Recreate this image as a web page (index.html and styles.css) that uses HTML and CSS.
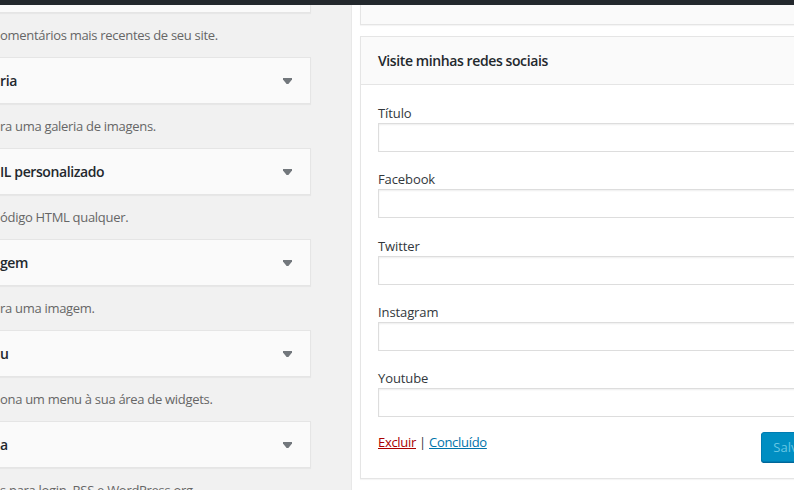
FILE: index.html
```html
<!DOCTYPE html>
<html lang="pt-BR">
<head>
<meta charset="utf-8">
<title>Widgets</title>
<link rel="stylesheet" href="styles.css">
</head>
<body>
<div class="adminbar"></div>
<div class="page">
  <div class="available">
    <div class="widget-top"><span class="wtitle">ários recentes</span><svg class="arrow" viewBox="0 0 9 6" width="9" height="6"><path d="M0 0H9V1.5L5.4 6H3.6L0 1.5Z"/></svg></div>
    <p class="desc">omentários mais recentes de seu site.</p>
    <div class="widget-top"><span class="wtitle">ria</span><svg class="arrow" viewBox="0 0 9 6" width="9" height="6"><path d="M0 0H9V1.5L5.4 6H3.6L0 1.5Z"/></svg></div>
    <p class="desc">ra uma galeria de imagens.</p>
    <div class="widget-top"><span class="wtitle">IL personalizado</span><svg class="arrow" viewBox="0 0 9 6" width="9" height="6"><path d="M0 0H9V1.5L5.4 6H3.6L0 1.5Z"/></svg></div>
    <p class="desc">ódigo HTML qualquer.</p>
    <div class="widget-top"><span class="wtitle">gem</span><svg class="arrow" viewBox="0 0 9 6" width="9" height="6"><path d="M0 0H9V1.5L5.4 6H3.6L0 1.5Z"/></svg></div>
    <p class="desc">ra uma imagem.</p>
    <div class="widget-top"><span class="wtitle">u</span><svg class="arrow" viewBox="0 0 9 6" width="9" height="6"><path d="M0 0H9V1.5L5.4 6H3.6L0 1.5Z"/></svg></div>
    <p class="desc">ona um menu à sua área de widgets.</p>
    <div class="widget-top"><span class="wtitle">a</span><svg class="arrow" viewBox="0 0 9 6" width="9" height="6"><path d="M0 0H9V1.5L5.4 6H3.6L0 1.5Z"/></svg></div>
    <p class="desc">s para login, RSS e WordPress.org.</p>
  </div>
  <div class="sidebar">
    <div class="widget collapsed"></div>
    <div class="widget open">
      <div class="widget-head"><h3 class="head-title">Visite minhas redes sociais</h3></div>
      <div class="widget-inside">
        <div class="field"><label class="flabel">Título</label><input class="finput" type="text"></div>
        <div class="field"><label class="flabel">Facebook</label><input class="finput" type="text"></div>
        <div class="field"><label class="flabel">Twitter</label><input class="finput" type="text"></div>
        <div class="field"><label class="flabel">Instagram</label><input class="finput" type="text"></div>
        <div class="field"><label class="flabel">Youtube</label><input class="finput" type="text"></div>
        <div class="actions">
          <div class="links"><a class="lnk-del" href="#">Excluir</a> <span class="sep">|</span> <a class="lnk-done" href="#">Concluído</a></div>
          <button class="btn-save" type="button" disabled>Salvar</button>
        </div>
      </div>
    </div>
  </div>
</div>
</body>
</html>
```

FILE: styles.css
```css
html, body {
  margin: 0;
  padding: 0;
  width: 794px;
  height: 490px;
  overflow: hidden;
  background: #f1f1f1;
  font-family: "Open Sans", "Noto Sans", "Liberation Sans", sans-serif;
  font-size: 13px;
  color: #444;
}

.adminbar {
  position: fixed;
  top: 0;
  left: 0;
  right: 0;
  height: 5px;
  background: #23282d;
  z-index: 10;
}

.page {
  display: grid;
  grid-template-columns: 351px 1fr;
  height: 490px;
}

.available {
  width: 311px;
  margin-top: -34px;
}

.widget-top {
  box-sizing: border-box;
  height: 47px;
  background: #fafafa;
  border: 1px solid #e5e5e5;
  border-left: 0;
  box-shadow: 0 1px 1px rgba(0, 0, 0, 0.04);
  display: flex;
  align-items: center;
  justify-content: space-between;
  padding: 0 18px 0 0;
}

.wtitle {
  font-weight: 600;
  font-size: 14px;
  color: #23282d;
  white-space: nowrap;
  letter-spacing: -0.4px;
}

.arrow {
  fill: #72777c;
  display: block;
}

.desc {
  margin: 0;
  padding: 13px 0;
  line-height: 18px;
  color: #666;
  white-space: nowrap;
  letter-spacing: -0.3px;
}

.sidebar {
  background: #fff;
  border-left: 1px solid #e8e8e8;
  padding-left: 8px;
}

.widget {
  box-sizing: border-box;
  width: 480px;
  border: 1px solid #e5e5e5;
  background: #fafafa;
  box-shadow: 0 1px 1px rgba(0, 0, 0, 0.04);
}

.collapsed {
  height: 47px;
  margin-top: -22px;
  margin-bottom: 11px;
}

.open {
  background: #fff;
}

.widget-head {
  height: 47px;
  background: #fafafa;
  border-bottom: 1px solid #e5e5e5;
  display: flex;
  align-items: center;
  padding-left: 17px;
}

.head-title {
  margin: 0;
  font-size: 14px;
  font-weight: 600;
  color: #23282d;
  letter-spacing: -0.4px;
}

.widget-inside {
  padding: 19px 17px 16px 17px;
  display: flex;
  flex-direction: column;
  gap: 18.25px;
}

.field {
  display: flex;
  flex-direction: column;
}

.flabel {
  display: block;
  line-height: 18px;
  height: 18px;
  color: #32373c;
  letter-spacing: -0.1px;
}

.finput {
  box-sizing: border-box;
  margin: 1px 0 0 0;
  height: 29px;
  width: 100%;
  border: 1px solid #ddd;
  box-shadow: inset 0 1px 2px rgba(0, 0, 0, 0.07);
  background: #fff;
  padding: 3px 5px;
  font: inherit;
}

.actions {
  display: flex;
  align-items: flex-start;
  justify-content: space-between;
  margin-top: -3.25px;
}

.links {
  line-height: 18px;
  padding-top: 1px;
  color: #32373c;
  letter-spacing: -0.3px;
}

.lnk-del {
  color: #a00;
  text-decoration: underline;
}

.lnk-done {
  color: #0073aa;
  text-decoration: underline;
}

.btn-save {
  box-sizing: border-box;
  height: 30px;
  padding: 0 11px;
  border: 1px solid #007cb2;
  border-radius: 3px;
  background: #008ec2;
  color: #66c6e4;
  font: inherit;
  font-size: 13px;
  line-height: 28px;
  box-shadow: 0 1px 0 #006799;
}
```
